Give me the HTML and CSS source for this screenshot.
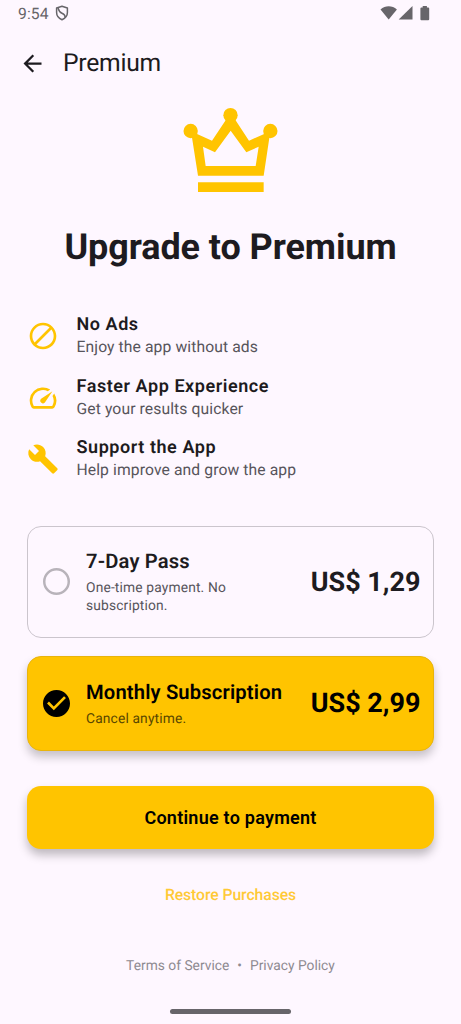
FILE: index.html
```html
<!DOCTYPE html>
<html lang="en">
<head>
<meta charset="utf-8">
<title>Premium</title>
<link rel="stylesheet" href="styles.css">
</head>
<body>
<div class="screen">
  <div class="status">
    <span class="clock">9:54</span>
    <svg class="shield" viewBox="0 0 14 16" fill="none" stroke="#67656a" stroke-width="1.5" stroke-linejoin="round"><path d="M7 1.200 12.400 3v4.600c0 3.200-2.300 5.800-5.400 7.100C3.900 13.400 1.600 10.800 1.600 7.600V3z"/><path d="M3 3c1 3.500 1.500 4.300 4 5.300s3 2 3.300 4"/></svg>
    <svg class="signals" viewBox="0 0 50 16" fill="#67656a"><path d="M.5 3.500C5.300-.9 12.100-.9 16.900 3.500L8.700 13.600z"/><path d="M32.500 0v13.600H18.700z"/><path d="M42.700 0h4.200v1.400h1.300q1 0 1 1v10.900q0 1-1 1h-6.800q-1 0-1-1V2.400q0-1 1-1h1.300z"/></svg>
  </div>
  <header class="appbar">
    <svg class="back" viewBox="0 0 24 24"><path d="M20 11H7.830l5.590-5.590L12 4l-8 8 8 8 1.410-1.410L7.830 13H20z"/></svg>
    <span class="bar-title">Premium</span>
  </header>
  <main class="content">
    <svg class="crown" viewBox="0 0 288 255" fill="#ffc400"><circle cx="23" cy="69" r="21.500"/><circle cx="142.500" cy="21.500" r="21.500"/><circle cx="262" cy="69" r="21.500"/><path fill-rule="evenodd" d="M24 70 87 98 143 14 198 98 262 70 242 203H45zM60 116 68 174H218L227 116 190 133 143 68 96 133z"/><path d="M45 223h197v29H45z"/></svg>
    <h1 class="headline">Upgrade to Premium</h1>
    <div class="features">
      <div class="feature">
        <svg class="icon" viewBox="0 0 24 24"><path d="M12 2C6.500 2 2 6.500 2 12s4.500 10 10 10 10-4.500 10-10S17.500 2 12 2zM4 12c0-4.400 3.600-8 8-8 1.800 0 3.500.6 4.900 1.700L5.700 16.900C4.600 15.500 4 13.800 4 12zm8 8c-1.800 0-3.500-.6-4.900-1.700L18.300 7.100C19.400 8.500 20 10.200 20 12c0 4.400-3.600 8-8 8z"/></svg>
        <div><div class="feature-title">No Ads</div><div class="feature-text">Enjoy the app without ads</div></div>
      </div>
      <div class="feature">
        <svg class="icon" viewBox="0 0 24 24"><path d="m20.380 8.570-1.230 1.850a8 8 0 0 1-.22 7.580H5.070A8 8 0 0 1 15.580 6.850l1.850-1.230A10 10 0 0 0 3.350 19a2 2 0 0 0 1.720 1h13.850a2 2 0 0 0 1.740-1 10 10 0 0 0-.27-10.440zm-9.790 6.840a2 2 0 0 0 2.830 0l5.660-8.490-8.490 5.660a2 2 0 0 0 0 2.830z"/></svg>
        <div><div class="feature-title">Faster App Experience</div><div class="feature-text">Get your results quicker</div></div>
      </div>
      <div class="feature">
        <svg class="icon" viewBox="0 0 24 24"><path d="M22.700 19l-9.100-9.100c.9-2.300.4-5-1.500-6.900-2-2-5-2.400-7.400-1.300L9 6 6 9 1.600 4.700C.4 7.100.9 10.100 2.900 12.100c1.900 1.900 4.600 2.400 6.900 1.500l9.100 9.100c.4.4 1 .4 1.400 0l2.300-2.300c.5-.4.5-1.100.1-1.400z"/></svg>
        <div><div class="feature-title">Support the App</div><div class="feature-text">Help improve and grow the app</div></div>
      </div>
    </div>
    <div class="plan">
      <svg class="radio" viewBox="0 0 24 24" fill="#b8b3ba"><path d="M12 0a12 12 0 1 0 0 24 12 12 0 0 0 0-24zm0 2.200a9.800 9.800 0 1 1 0 19.600 9.800 9.800 0 0 1 0-19.600z"/></svg>
      <div class="plan-info"><div class="plan-title">7-Day Pass</div><div class="plan-text">One-time payment. No subscription.</div></div>
      <div class="price">US$ 1,29</div>
    </div>
    <div class="plan selected">
      <svg class="radio" viewBox="2 2 20 20"><path d="M12 2C6.480 2 2 6.480 2 12s4.480 10 10 10 10-4.480 10-10S17.520 2 12 2zm-2 15-5-5 1.410-1.410L10 14.170l7.590-7.590L19 8l-9 9z"/></svg>
      <div class="plan-info"><div class="plan-title">Monthly Subscription</div><div class="plan-text">Cancel anytime.</div></div>
      <div class="price">US$ 2,99</div>
    </div>
    <button class="pay">Continue to payment</button>
    <a class="restore">Restore Purchases</a>
    <div class="legal"><span>Terms of Service</span><span class="dot">•</span><span>Privacy Policy</span></div>
  </main>
  <div class="handle"></div>
</div>
</body>
</html>
```
FILE: styles.css
```css
* { box-sizing: border-box; }
body { margin: 0; background: #fef7ff; font-family: Roboto, sans-serif; color: #1d1b20; text-rendering: geometricPrecision; }
.screen { width: 461px; height: 1024px; display: flex; flex-direction: column; align-items: center; overflow: hidden; white-space: nowrap; }
.status { width: 100%; height: 27px; padding: 0 31px 0 18px; display: flex; align-items: center; color: #67656a; }
.clock { font-size: 15.7px; line-height: 26px; letter-spacing: 0.1px; }
.shield { width: 14px; height: 16px; margin: 0 0 1px 6px; }
.signals { width: 50px; height: 16px; margin-left: auto; }
.appbar { width: 100%; height: 72px; padding-left: 18.5px; display: flex; align-items: center; }
.back { width: 27px; height: 27px; fill: #1d1b20; }
.bar-title { margin-left: 17.5px; padding-top: 2px; font-size: 24.7px; line-height: 30px; letter-spacing: -0.25px; }
.content { width: 407px; display: flex; flex-direction: column; align-items: center; }
.crown { width: 96px; height: 85px; margin-top: 9px; }
.headline { margin: 33px 0 0; font-size: 36px; line-height: 42px; font-weight: 700; letter-spacing: -0.08px; }
.features { align-self: stretch; margin: 46px 0 0 -0.5px; display: flex; flex-direction: column; gap: 17.5px; }
.feature { display: flex; align-items: center; gap: 18px; }
.icon { width: 32px; height: 32px; fill: #ffc400; }
.feature-title { font-size: 18px; line-height: 22px; font-weight: 600; letter-spacing: 0.56px; }
.feature-text { font-size: 15.7px; line-height: 22px; letter-spacing: 0.1px; color: #57545b; }
.plan { align-self: stretch; height: 112px; margin-top: 44.5px; padding: 0 12.5px 0 15px; display: flex; align-items: center; border: 1px solid #cbc5cd; border-radius: 14px; }
.radio { width: 27px; height: 27px; flex: none; }
.plan-info { flex: 1; margin-left: 16px; }
.plan-title { font-size: 20.2px; line-height: 27px; font-weight: 600; letter-spacing: 0.15px; }
.plan-text { width: 170px; margin-top: 4px; font-size: 13.8px; line-height: 18px; letter-spacing: 0.15px; color: #57545b; white-space: normal; }
.price { font-size: 27px; line-height: 32px; font-weight: 700; }
.selected { height: 95px; margin-top: 18px; color: #000; background: #ffc400; border-color: #e9b40b; box-shadow: 0 6px 10px rgba(0,0,0,.22); }
.selected .plan-text { color: #594700; }
.pay { align-self: stretch; height: 63px; margin-top: 35.5px; border: 0; border-radius: 14px; background: #ffc400; box-shadow: 0 6px 10px rgba(0,0,0,.25); font: 600 18px/22px Roboto, sans-serif; letter-spacing: 0.25px; color: #000; }
.restore { margin-top: 34.5px; font-size: 15.7px; line-height: 22px; font-weight: 500; letter-spacing: -0.05px; color: #ffc936; }
.legal { margin-top: 51px; display: flex; font-size: 13.8px; line-height: 18px; color: #8e8a91; }
.dot { margin: 0 8px; }
.handle { width: 121px; height: 5px; margin-top: 34px; border-radius: 2.5px; background: #67656a; }
```
